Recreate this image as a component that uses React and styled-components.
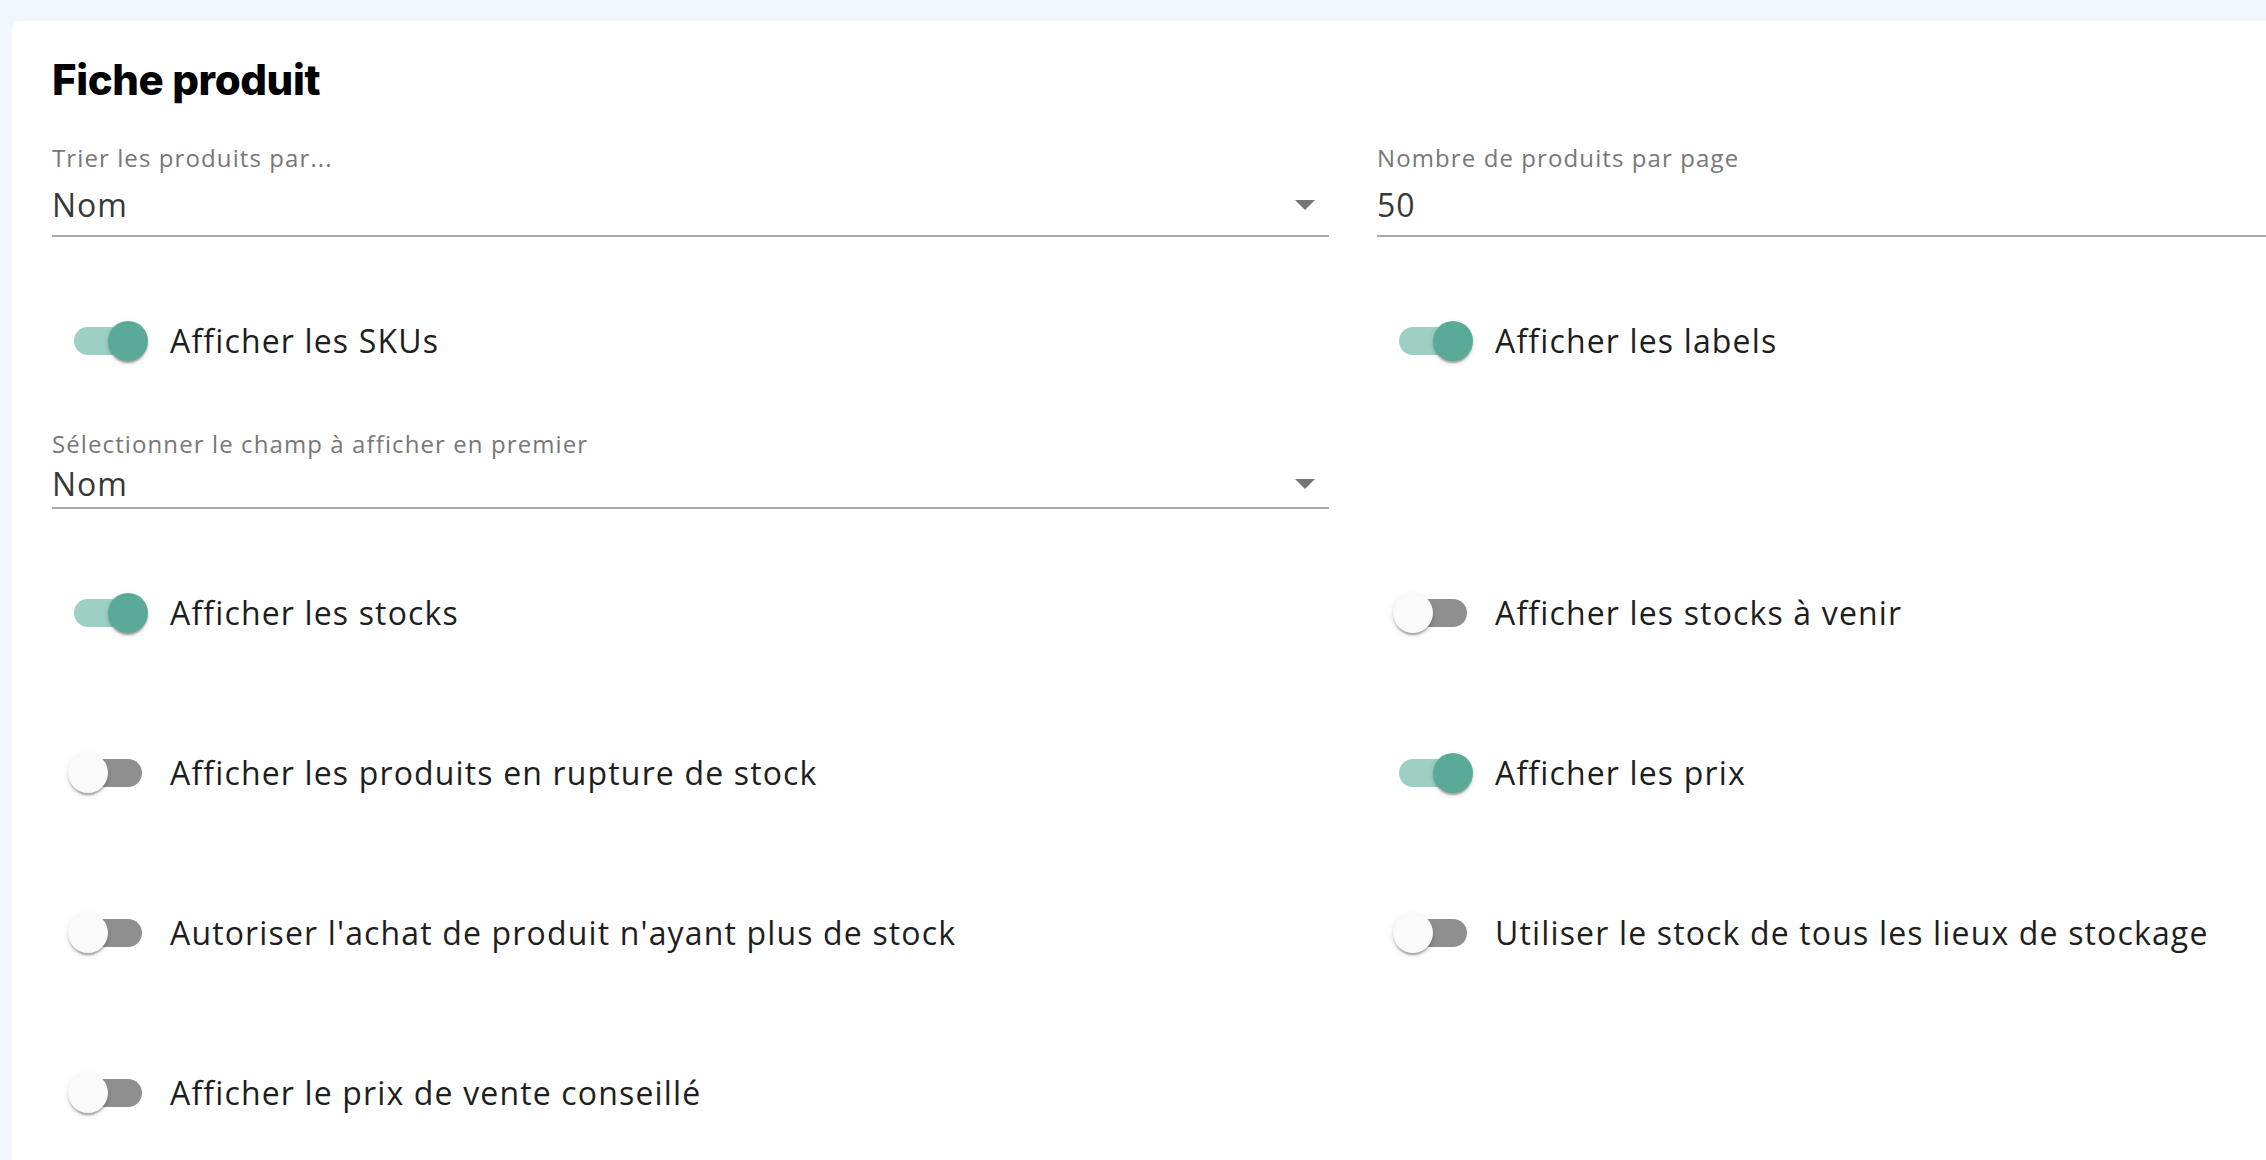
import React from "react";
import styled, { createGlobalStyle } from "styled-components";

const Global = createGlobalStyle`
  html, body {
    margin: 0;
    padding: 0;
    background: #f2f6fd;
    overflow: hidden;
  }
  body {
    font-family: "Open Sans", "Noto Sans", sans-serif;
  }
`;

const Page = styled.div`
  width: 2266px;
  height: 1160px;
  overflow: hidden;
  padding: 21px 0 0 12px;
  box-sizing: border-box;
`;

const Card = styled.section`
  width: 2682px;
  min-height: 1300px;
  background: #ffffff;
  border-radius: 8px;
  padding: 34px 40px 40px 40px;
  box-sizing: border-box;
`;

const Title = styled.h2`
  margin: 0;
  font-family: Inter, "Liberation Sans", sans-serif;
  font-weight: 800;
  font-size: 42px;
  line-height: 50px;
  color: #000;
  letter-spacing: -0.4px;
`;

const Row = styled.div`
  display: grid;
  grid-template-columns: 1277px 1277px;
  column-gap: 48px;
  margin-top: ${(p) => p.$mt || 0}px;
  align-items: start;
`;

const Field = styled.div`
  display: flex;
  flex-direction: column;
`;

const FieldLabel = styled.label`
  font-size: 24px;
  line-height: 30px;
  color: #777777;
  letter-spacing: 1.1px;
  white-space: nowrap;
`;

const InputBox = styled.div`
  position: relative;
  margin-top: ${(p) => p.$gap}px;
  padding-bottom: ${(p) => p.$pb}px;
  border-bottom: 2px solid #a9a9a9;
  font-size: 32px;
  line-height: 46px;
  letter-spacing: 1px;
  color: #383838;
`;

const Caret = styled.svg`
  position: absolute;
  right: 0;
  top: 0;
  width: 48px;
  height: 46px;
`;

const ToggleLine = styled.div`
  display: flex;
  align-items: center;
  height: 80px;
`;

const SwitchBox = styled.span`
  position: relative;
  flex: none;
  width: 80px;
  height: 40px;
  margin-left: 16px;
`;

const Track = styled.span`
  position: absolute;
  left: 6px;
  top: 6px;
  width: 68px;
  height: 28px;
  border-radius: 14px;
  background: ${(p) => (p.$on ? "#9ecfc3" : "#8f8f8f")};
`;

const Thumb = styled.span`
  position: absolute;
  top: 0;
  left: ${(p) => (p.$on ? 40 : 0)}px;
  width: 40px;
  height: 40px;
  border-radius: 50%;
  background: ${(p) => (p.$on ? "#5aaa98" : "#fafafa")};
  box-shadow: 0 4px 2px -2px rgba(0, 0, 0, 0.2), 0 2px 2px 0 rgba(0, 0, 0, 0.14),
    0 2px 6px 0 rgba(0, 0, 0, 0.12);
`;

const ToggleText = styled.span`
  margin-left: 22px;
  font-size: 32px;
  line-height: 44px;
  letter-spacing: 1.15px;
  color: #1e1e1e;
  white-space: nowrap;
`;

function Select({ label, value, caret, gap, pb }) {
  return (
    <Field>
      <FieldLabel>{label}</FieldLabel>
      <InputBox $gap={gap} $pb={pb}>
        {value}
        {caret && (
          <Caret viewBox="0 0 24 23">
            <path d="M7 9l5 5 5-5z" fill="#767676" />
          </Caret>
        )}
      </InputBox>
    </Field>
  );
}

function Toggle({ on, label }) {
  return (
    <ToggleLine>
      <SwitchBox>
        <Track $on={on} />
        <Thumb $on={on} />
      </SwitchBox>
      <ToggleText>{label}</ToggleText>
    </ToggleLine>
  );
}

export default function App() {
  return (
    <>
      <Global />
      <Page>
        <Card>
          <Title>Fiche produit</Title>
          <Row $mt={38}>
            <Select label="Trier les produits par..." value="Nom" caret gap={9} pb={7} />
            <Select label="Nombre de produits par page" value="50" gap={9} pb={7} />
          </Row>
          <Row $mt={64}>
            <Toggle on label="Afficher les SKUs" />
            <Toggle on label="Afficher les labels" />
          </Row>
          <Row $mt={48}>
            <Select label="Sélectionner le champ à afficher en premier" value="Nom" caret gap={2} pb={0} />
            <div />
          </Row>
          <Row $mt={64}>
            <Toggle on label="Afficher les stocks" />
            <Toggle label="Afficher les stocks à venir" />
          </Row>
          <Row $mt={80}>
            <Toggle label="Afficher les produits en rupture de stock" />
            <Toggle on label="Afficher les prix" />
          </Row>
          <Row $mt={80}>
            <Toggle label="Autoriser l'achat de produit n'ayant plus de stock" />
            <Toggle label="Utiliser le stock de tous les lieux de stockage" />
          </Row>
          <Row $mt={80}>
            <Toggle label="Afficher le prix de vente conseillé" />
            <div />
          </Row>
        </Card>
      </Page>
    </>
  );
}
